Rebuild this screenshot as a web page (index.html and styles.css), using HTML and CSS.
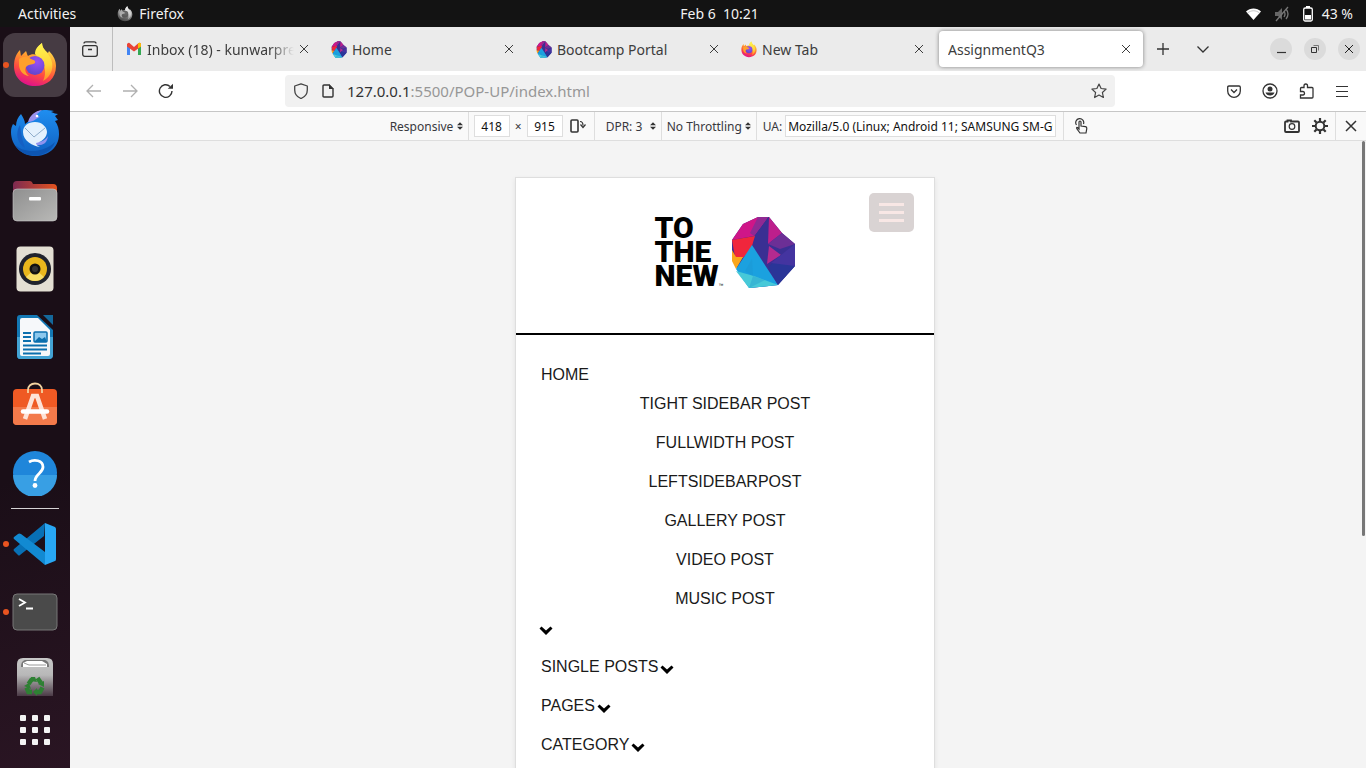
FILE: index.html
```html
<!DOCTYPE html>
<html lang="en">
<head>
<meta charset="utf-8">
<title>AssignmentQ3</title>
<meta name="viewport" content="width=device-width, initial-scale=1">
<link rel="stylesheet" href="styles.css">
</head>
<body>
<svg class="defs" width="0" height="0" aria-hidden="true">
  <defs>
    <linearGradient id="fxBody" x1="0.75" y1="0" x2="0.4" y2="1"><stop offset="0.1" stop-color="#ffe34f"/><stop offset="0.4" stop-color="#ff9a2e"/><stop offset="0.7" stop-color="#ff4a41"/><stop offset="1" stop-color="#e0128a"/></linearGradient>
    <linearGradient id="fxFlame" x1="0.5" y1="0" x2="0.6" y2="1"><stop offset="0" stop-color="#fff44f"/><stop offset="0.6" stop-color="#ffd43a"/><stop offset="1" stop-color="#ff8a2a"/></linearGradient>
    <radialGradient id="fxGlobe" cx="0.6" cy="0.3" r="0.8"><stop offset="0" stop-color="#9a4ff5"/><stop offset="1" stop-color="#5a45c8"/></radialGradient>
    <linearGradient id="tbBody" x1="0.5" y1="0" x2="0.5" y2="1"><stop offset="0" stop-color="#1f8ef0"/><stop offset="1" stop-color="#0f5fc0"/></linearGradient>
    <linearGradient id="folderBack"><stop offset="0" stop-color="#7d2a51"/><stop offset="1" stop-color="#e4531f"/></linearGradient>
    <linearGradient id="folderFront" x2="1" y2="1"><stop offset="0" stop-color="#8f8f8f"/><stop offset="1" stop-color="#b9b9b7"/></linearGradient>
    <linearGradient id="trashBody" x2="0" y2="1"><stop offset="0" stop-color="#c8c8c8"/><stop offset="0.45" stop-color="#b8b8b8"/><stop offset="1" stop-color="#4b3a46"/></linearGradient>
    <symbol id="firefox" viewBox="0 0 44 46">
      <path fill="url(#fxBody)" d="M1 24C1 17 3 12 7 8l1 6 5-5c1 2 1 4 2 5 3-2 6-2 9-1C22 8 25 4 29 1c0 4 2 7 6 10l1-2c5 5 7 10 7 15 0 13-9 20-21 20S1 36 1 24z"/>
      <path fill="url(#fxFlame)" d="M22 12C22 7 25 4 29 1c0 6 5 8 8 14 5 9 2 19-7 24 4-8 2-17-3-21-1-2-3-4-5-6z"/>
      <circle cx="22" cy="23.500" r="9.500" fill="url(#fxGlobe)"/>
      <path fill="#ffa02c" d="M6 17c4-3 8-3 12 0 2 1 5 1 4 4-2 2-6 1-8 3-3 2-2 7 2 10-7-1-10-7-10-11z"/>
    </symbol>
    <symbol id="gem" viewBox="0 0 64 72">
      <path fill="#3a2f93" d="M27 1h11l13 16 13 11v22l-17 19-28 3L6 53 1 38V24L12 8z"/>
      <path fill="#cf1688" d="M27 1 12 8 1 24l22-4L37 1z"/>
      <path fill="#8f2a93" d="M27 1h10L23 20l-4-3z"/>
      <path fill="#bd1f8c" d="m38 1 13 16-14 11z"/>
      <path fill="#6c2f96" d="m51 17 13 11-15 5-12-5z"/>
      <path fill="#b52a8f" d="m38 30 12 9-14 9z"/>
      <path fill="#f0263c" d="m1 24 23-4-4 13-8 9-8-1z"/>
      <path fill="#f9a61c" d="m1 34 4 7h7L5 53 1 45z"/>
      <path fill="#1ba1df" d="m21 29 26 40-29 3L5 53z"/>
      <path fill="#47c9d8" d="m5 55 13 17 29-3-24-9z"/>
      <path fill="#1c91cf" d="m22 60-8-5 7-12zM22 60l-4 12 16-8z" opacity=".35"/>
      <path fill="#2a3598" d="M64 50 47 69 37 51l13-12 14 12z"/>
      <path fill="#4434a0" d="m50 39 14-11v22l-24-3z"/>
    </symbol>
    <symbol id="close" viewBox="0 0 10 10"><path d="m1 1 8 8M9 1 1 9" fill="none" stroke="currentColor"/></symbol>
    <symbol id="updown" viewBox="0 0 7 9"><path d="M3.500 0 7 3.500H0zM3.500 9 7 5.500H0z" fill="#333"/></symbol>
    <symbol id="chevron" viewBox="0 0 14 10"><path d="M.5 2.500 2.500.5 7 4.500 11.500.5l2 2L7 9z" fill="#000"/></symbol>
  </defs>
</svg>

<header class="topbar">
  <div class="topbar-left">
    <button type="button">Activities</button>
    <button type="button" class="app-menu"><svg class="gray" width="16" height="16"><use href="#firefox"/></svg>Firefox</button>
  </div>
  <button type="button" class="clock">Feb 6&nbsp; 10:21</button>
  <div class="status">
    <svg width="17" height="16" viewBox="0 0 17 16"><path d="M1 5.500C5 1.500 12 1.500 16 5.500L8.500 14z" fill="#fff"/><path d="M2.500 7c3.500-3 8.500-3 12 0" fill="none" stroke="#aaa" stroke-width=".7"/></svg>
    <svg width="16" height="16" viewBox="0 0 16 16"><path d="M1 6h3l4-4v12l-4-4H1z" fill="#666"/><path d="M10 5q2 3 0 6M12 3q4 5 0 10M14 1 2 15" fill="none" stroke="#777" stroke-width="1.300"/></svg>
    <svg width="12" height="16" viewBox="0 0 12 16"><path d="M4 0h4v2H4z" fill="#fff"/><rect x="1.700" y="2" width="8.600" height="13" rx="1.500" fill="none" stroke="#fff" stroke-width="1.300"/><path d="M3 9h6v4.500H3z" fill="#fff"/></svg>
    <span>43 %</span>
  </div>
</header>

<div class="desktop">
  <nav class="dock" aria-label="Dock">
    <button type="button" class="dock-item running" aria-label="Firefox"><span class="tile active"><svg width="44" height="46"><use href="#firefox"/></svg></span></button>
    <button type="button" class="dock-item" aria-label="Thunderbird"><span class="tile"><svg width="48" height="48" viewBox="0 0 48 48">
      <path d="M0 23c0-4 1-6 2-8l3 2c0-5 2-9 5-12 2 3 4 7 4 10l4-3C20 6 26 1 33 1c4 0 6 0 10 1l-3 1c3 1 5 2 7 2l-3 2 3 4-3 1c3 4 4 8 4 13 0 14-11 22-24 22S0 37 0 23z" fill="url(#tbBody)"/>
      <path d="M17 13C19 6 24 2 31 1c-2 2-5 3-6 6 1 0 3 0 4 1-4 1-6 5-12 5z" fill="#9a92ee"/><circle cx="26" cy="7" r="1.300" fill="#fff"/>
      <path d="M4 36c8 8 28 9 40-3-5 16-31 19-40 3z" fill="#0d55b2"/>
      <path d="M9 16c-5 8-3 18 5 23-3-8-4-15-5-23z" fill="#1560c4"/><path d="M24 36c7 1 12-1 13-9-3 5-7 6-13 6z" fill="#8f93ee"/>
      <path d="M12 23c0-6 5-10 12-10s12 5 12 10-5 10-11 11c0 2 2 3 4 4-7-1-17-6-17-15z" fill="#e4f1fd"/><path d="m14 19 9 9 11-9" fill="none" stroke="#8fadcb"/></svg></span></button>
    <button type="button" class="dock-item" aria-label="Files"><span class="tile"><svg width="46" height="42" viewBox="0 0 46 42">
      <path d="M1 12V5q0-4 4-4h13q2 0 3 3h20q4 0 4 4v10z" fill="url(#folderBack)"/><rect x="1" y="9" width="44" height="32" rx="4" fill="url(#folderFront)" stroke="#c9c9c9" stroke-width=".6"/><rect x="17" y="17" width="12" height="3.500" rx="1" fill="#fff"/></svg></span></button>
    <button type="button" class="dock-item" aria-label="Rhythmbox"><span class="tile"><svg width="38" height="46" viewBox="0 0 38 46">
      <rect x=".5" y=".5" width="37" height="45" rx="4" fill="#e3dfd3"/><circle cx="19" cy="23" r="16" fill="#20232c"/><circle cx="19" cy="23" r="12" fill="#e9b71c"/><path d="M10 31a12 12 0 0 0 18 0l-9-8z" fill="#f7dd66"/><circle cx="19" cy="23" r="5.500" fill="#111"/><circle cx="19" cy="23" r="3" fill="#333"/></svg></span></button>
    <button type="button" class="dock-item" aria-label="LibreOffice Writer"><span class="tile"><svg width="38" height="46" viewBox="0 0 38 46">
      <path d="M4 1h17l16 15v25q0 4-4 4H4q-3 0-3-4V4q0-3 3-3z" fill="#1378b4"/><path d="M1 23h36v18q0 4-4 4H4q-3 0-3-4z" fill="#43a3d4"/><path d="M27 1h10v10z" fill="#14689b"/><path d="M4 6q0-2 2-2h16l12 12v24q0 2-2 2H6q-2 0-2-2z" fill="#f6f8fa"/>
      <path d="M7 19h8M7 23h8M7 27h8M7 31.500h24M7 35.500h24M7 39.500h18" stroke="#0b6fae" stroke-width="2"/><rect x="18" y="18" width="13" height="10" rx="1" fill="#8cc8ed" stroke="#0b6fae" stroke-width="1.500"/><path d="m18 28 5-5 3 2 3-2 2 5z" fill="#0b6fae"/></svg></span></button>
    <button type="button" class="dock-item" aria-label="Ubuntu Software"><span class="tile"><svg width="46" height="46" viewBox="0 0 46 46">
      <rect x="1" y="7" width="44" height="36" rx="4" fill="#ef5a24"/><path d="M1 25h44v14q0 4-4 4H5q-4 0-4-4z" fill="#f37a4b"/><path d="M16 11V8c0-4 3-6.500 7-6.500S30 4 30 8v3" fill="none" stroke="#f3d3a0" stroke-width="1.800"/><path d="M13 37 21 14h4l8 23" fill="none" stroke="#fde3d8" stroke-width="4.500"/><path d="M11 29.500h24" stroke="#fff" stroke-width="4.500" stroke-linecap="round"/></svg></span></button>
    <button type="button" class="dock-item" aria-label="Help"><span class="tile"><svg width="46" height="46" viewBox="0 0 46 46">
      <circle cx="23" cy="23" r="22" fill="#1f86da"/><path d="M1 25h44a22 22 0 0 1-44 0z" fill="#389fe4"/><path d="M17 12c5-3 14-2 14 5 0 6-8 7-8 14" fill="none" stroke="#fff" stroke-width="2.800"/><circle cx="23" cy="35.500" r="2.400" fill="#fff"/></svg></span></button>
    <hr>
    <button type="button" class="dock-item running" aria-label="Visual Studio Code"><span class="tile"><svg width="44" height="44" viewBox="0 0 44 44">
      <path d="m32 1-1 13L7 33q-1 1-2 0l-4-4q-1-1 0-2z" fill="#0870b5"/><path d="m1 15 4-3q1-1 3 0l24 18v13L1 17q-1-1 0-2z" fill="#128ad2"/><path d="m32 1 10 4q1 1 1 2v30q0 2-1 2l-10 4z" fill="#28a7f4"/></svg></span></button>
    <button type="button" class="dock-item running" aria-label="Terminal"><span class="tile"><svg width="46" height="38" viewBox="0 0 46 38">
      <rect x="1" y="1" width="44" height="36" rx="4" fill="#4a4a4a" stroke="#777"/><path d="m7 6 6 3.500L7 13M14 15.500h7" fill="none" stroke="#fff" stroke-width="1.800"/></svg></span></button>
    <button type="button" class="dock-item" aria-label="Trash"><span class="tile"><svg width="38" height="46" viewBox="0 0 38 46">
      <path d="M1 39V7q0-6 6-6h24q6 0 6 6v32z" fill="url(#trashBody)"/><path d="M5 10c0-5 2-7 5-7h18c3 0 5 2 5 7z" fill="#777"/><path d="M7 10V6l4-2h15l5 3v3z" fill="#fff"/><path d="m8 6 5 2h17" fill="none" stroke="#999"/>
      <g fill="none" stroke="#2e8033" stroke-width="4.500"><path d="m12.500 27 3.500-5M21.500 21l3.500 5M26.500 30.500l-2.500 4.500h-3M16 35h-3.500l-2-4.500"/></g><path d="m15 20 4 0 2 5-7-1zM22 27l6-3 0 6zM21 31v8l-4-4zM8 29l5-3 2 6z" fill="#2e8033"/></svg></span></button>
    <button type="button" class="apps" aria-label="Show Applications"><i></i><i></i><i></i><i></i><i></i><i></i><i></i><i></i><i></i></button>
  </nav>

  <main class="browser">
    <div class="tabstrip">
      <button type="button" class="recent" aria-label="Recent browsing"><svg width="16" height="16" viewBox="0 0 16 16" fill="none" stroke="#333" stroke-width="1.300"><rect x=".7" y="4.700" width="14.600" height="10.600" rx="2"/><path d="M2 2.500q0-1.700 2-1.700h8q2 0 2 1.700M6 8.500h4"/></svg></button>
      <div class="tabs">
        <div class="tab"><svg width="16" height="16" viewBox="0 0 16 16"><path d="M1 14V4l3 2v8z" fill="#4285f4"/><path d="M15 14V4l-3 2v8z" fill="#34a853"/><path d="M1 3q2-2 3-.500L8 6l4-3.500Q14 1 15 3v2.500L8 10.500 1 5.500z" fill="#ea4335"/><path d="M12 2.500Q14 1 15 3v2.500l-3 2z" fill="#fbbc04"/></svg><span class="title fade">Inbox (18) - kunwarpre</span><button type="button" aria-label="Close tab"><svg width="10" height="10"><use href="#close"/></svg></button></div>
        <div class="tab"><svg width="16" height="17"><use href="#gem"/></svg><span class="title">Home</span><button type="button" aria-label="Close tab"><svg width="10" height="10"><use href="#close"/></svg></button></div>
        <div class="tab"><svg width="16" height="17"><use href="#gem"/></svg><span class="title">Bootcamp Portal</span><button type="button" aria-label="Close tab"><svg width="10" height="10"><use href="#close"/></svg></button></div>
        <div class="tab"><svg width="16" height="17"><use href="#firefox"/></svg><span class="title">New Tab</span><button type="button" aria-label="Close tab"><svg width="10" height="10"><use href="#close"/></svg></button></div>
        <div class="tab selected"><span class="title">AssignmentQ3</span><button type="button" aria-label="Close tab"><svg width="10" height="10"><use href="#close"/></svg></button></div>
      </div>
      <button type="button" class="strip-button" aria-label="New tab"><svg width="12" height="12" viewBox="0 0 12 12"><path d="M6 0v12M0 6h12" stroke="#333" stroke-width="1.300"/></svg></button>
      <button type="button" class="strip-button" aria-label="List all tabs"><svg width="12" height="7" viewBox="0 0 12 7"><path d="m.5.5 5.500 5.500L11.500.5" fill="none" stroke="#333" stroke-width="1.300"/></svg></button>
      <div class="window-controls">
        <button type="button" aria-label="Minimize"><svg width="9" height="9"><path d="M0 7.500h9" stroke="#333" stroke-width="1.200"/></svg></button>
        <button type="button" aria-label="Restore"><svg width="9" height="9" fill="none" stroke="#333"><path d="M.5 2.500h5v5h-5z"/><path d="M2.500.5h5v5" stroke="#777"/></svg></button>
        <button type="button" aria-label="Close"><svg width="10" height="10"><use href="#close"/></svg></button>
      </div>
    </div>

    <div class="navbar">
      <div class="history">
        <button type="button" class="dim" aria-label="Back"><svg width="16" height="14" viewBox="0 0 16 14"><path d="M15 7H1.500M7 1 1 7l6 6" fill="none" stroke="currentColor" stroke-width="1.300"/></svg></button>
        <button type="button" class="dim" aria-label="Forward"><svg width="16" height="14" viewBox="0 0 16 14"><path d="M1 7h13.500M9 1l6 6-6 6" fill="none" stroke="currentColor" stroke-width="1.300"/></svg></button>
        <button type="button" aria-label="Reload"><svg width="16" height="16" viewBox="0 0 16 16"><path d="M14 8a6.300 6.300 0 1 1-2-4.600" fill="none" stroke="#333" stroke-width="1.400"/><path d="M15 .8v5H9.800z" fill="#333"/></svg></button>
      </div>
      <div class="urlbar">
        <svg width="16" height="16" viewBox="0 0 16 16"><path d="M8 .8 14.300 3v4c0 4-2.500 7-6.300 8.500C4.200 14 1.700 11 1.700 7V3z" fill="none" stroke="#444" stroke-width="1.300" stroke-linejoin="round"/></svg>
        <svg width="12" height="14" viewBox="0 0 12 14"><path d="M1 2q0-1 1-1h5l4 4v7q0 1-1 1H2q-1 0-1-1z" fill="none" stroke="#333" stroke-width="1.400"/><path d="M7 0v5h5z" fill="#333"/></svg>
        <div class="url" role="textbox" tabindex="0" aria-label="Address"><b>127.0.0.1</b>:5500/POP-UP/index.html</div>
        <button type="button" aria-label="Bookmark this page"><svg width="16" height="16" viewBox="0 0 16 16"><path d="m8 1 2.100 4.500 5 .6-3.700 3.400 1 5L8 12l-4.400 2.500 1-5L.9 6.100l5-.6z" fill="none" stroke="#444" stroke-width="1.200" stroke-linejoin="round"/></svg></button>
      </div>
      <div class="nav-actions">
        <button type="button" aria-label="Save to Pocket"><svg width="14" height="13" viewBox="0 0 14 13" fill="none" stroke="#333" stroke-width="1.300"><path d="M2 1h10q1.300 0 1.300 1.300V6A6 6 0 0 1 .7 6V2.300Q.7 1 2 1z"/><path d="m4 4.500 3 3 3-3"/></svg></button>
        <button type="button" aria-label="Account"><svg width="16" height="16" viewBox="0 0 16 16"><circle cx="8" cy="8" r="7" fill="none" stroke="#333" stroke-width="1.300"/><circle cx="8" cy="6" r="2.500" fill="#333"/><path d="M3.500 9.500h9Q11.500 12.500 8 12.500t-4.500-3z" fill="#333"/></svg></button>
        <button type="button" aria-label="Extensions"><svg width="15" height="16" viewBox="0 0 15 16"><path d="M1.500 5.500q0-1 1-1H5V3q0-2 1.800-2T8.500 3v1.500H13q1 0 1 1V14q0 1-1 1H1.500v-3H4q1.500 0 1.500-1.700T4 8.500H1.500z" fill="none" stroke="#333" stroke-width="1.300"/></svg></button>
        <button type="button" aria-label="Open menu"><svg width="12" height="11" viewBox="0 0 12 11"><path d="M0 .5h12M0 5.500h12M0 10.500h12" stroke="#333"/></svg></button>
      </div>
    </div>

    <div class="device-bar">
      <div class="spacer-start"></div>
      <div class="group device"><select aria-label="Device"><option>Responsive</option></select><svg width="6" height="8"><use href="#updown"/></svg></div>
      <div class="group size">
        <input type="text" value="418" aria-label="Width"><span>×</span><input type="text" value="915" aria-label="Height">
        <button type="button" aria-label="Rotate viewport"><svg width="16" height="14" viewBox="0 0 16 14"><rect x="1" y="1" width="7" height="12" rx="1" fill="none" stroke="#333" stroke-width="1.600"/><path d="M10 2.500q3 0 3 4M10.500 5.500l2.500 3 2.500-3" fill="none" stroke="#333" stroke-width="1.200"/></svg></button>
      </div>
      <div class="group dpr"><select aria-label="Device pixel ratio"><option>DPR: 3</option></select><svg width="6" height="8"><use href="#updown"/></svg></div>
      <div class="group throttle"><select aria-label="Network throttling"><option>No Throttling</option></select><svg width="6" height="8"><use href="#updown"/></svg></div>
      <div class="group agent"><label for="ua">UA:</label><input id="ua" type="text" value="Mozilla/5.0 (Linux; Android 11; SAMSUNG SM-G973U) AppleWebKit/537.36"></div>
      <button type="button" class="touch" aria-label="Touch simulation"><svg width="14" height="16" viewBox="0 0 14 16" fill="none" stroke="#333" stroke-width="1.200"><path d="M5 11V4q0-1 1-1t1 1v4l4.500.7q1.500.3 1.300 2L12 15H6L3 11q-1-2 .5-1.500z"/><path d="M2.500 7A4 4 0 1 1 9.500 6"/></svg></button>
      <div class="spacer-end"></div>
      <div class="device-actions">
        <button type="button" aria-label="Screenshot"><svg width="16" height="14" viewBox="0 0 16 14" fill="none" stroke="#333"><path d="M2 2.500h1.500v-1H7v1h7q1 0 1 1v8.500q0 1-1 1H2q-1 0-1-1V3.500q0-1 1-1z" stroke-width="1.800"/><circle cx="8" cy="7.500" r="2.800" stroke-width="1.200"/></svg></button>
        <button type="button" aria-label="Settings"><svg width="16" height="16" viewBox="0 0 16 16" fill="none" stroke="#333"><circle cx="8" cy="8" r="4.300" stroke-width="2"/><path d="M8 0v3M8 13v3M0 8h3M13 8h3M2.300 2.300l2.200 2.200M11.500 11.500l2.200 2.200M13.700 2.300l-2.200 2.200M4.500 11.500l-2.200 2.200" stroke-width="2.200"/></svg></button>
      </div>
      <button type="button" class="device-close" aria-label="Close responsive design mode"><svg width="12" height="12" viewBox="0 0 12 12"><path d="m1 1 10 10M11 1 1 11" stroke="#333" stroke-width="1.500"/></svg></button>
    </div>

    <div class="canvas">
      <div class="viewport">
        <header class="site-header">
          <a href="#" class="logo"><span class="wordmark"><span>TO</span><span>THE</span><span>NEW</span></span><small>™</small><svg width="64" height="72"><use href="#gem"/></svg></a>
          <button type="button" class="burger" aria-label="Menu"><i></i><i></i><i></i></button>
        </header>
        <nav class="site-nav">
          <ul class="menu">
            <li class="home"><a href="#">HOME</a>
              <ul class="submenu">
                <li><a href="#">TIGHT SIDEBAR POST</a></li>
                <li><a href="#">FULLWIDTH POST</a></li>
                <li><a href="#">LEFTSIDEBARPOST</a></li>
                <li><a href="#">GALLERY POST</a></li>
                <li><a href="#">VIDEO POST</a></li>
                <li><a href="#">MUSIC POST</a></li>
              </ul>
              <svg class="caret" width="14" height="10"><use href="#chevron"/></svg>
            </li>
            <li class="entry"><a href="#">SINGLE POSTS</a><svg width="14" height="10"><use href="#chevron"/></svg></li>
            <li class="entry"><a href="#">PAGES</a><svg width="14" height="10"><use href="#chevron"/></svg></li>
            <li class="entry"><a href="#">CATEGORY</a><svg width="14" height="10"><use href="#chevron"/></svg></li>
          </ul>
        </nav>
      </div>
      <div class="scroll-thumb"></div>
    </div>
  </main>
</div>
</body>
</html>
```

FILE: styles.css
```css
* { box-sizing: border-box; }
body {
  margin: 0;
  height: 100vh;
  display: flex;
  flex-direction: column;
  overflow: hidden;
  font: 14px "Noto Sans", sans-serif;
  color: #3d3d3d;
}
button {
  display: flex;
  align-items: center;
  justify-content: center;
  padding: 0;
  border: 0;
  background: none;
  font: inherit;
  color: inherit;
}
svg { flex: none; display: block; }
.defs { position: absolute; }
a { color: inherit; text-decoration: none; }
ul { list-style: none; margin: 0; padding: 0; }

/* System bar */
.topbar { flex: none; display: flex; align-items: center; height: 27px; background: #131313; color: #f2f2f2; }
.topbar-left { flex: 1 1 70px; display: flex; gap: 41px; padding-left: 18px; }
.app-menu { gap: 6px; }
.gray { filter: grayscale(1); }
.clock { margin-left: 16px; }
.status { flex: 1 1 0; display: flex; align-items: center; justify-content: flex-end; gap: 12px; padding-right: 13px; }
.status span { margin-left: -4px; }

/* Dock */
.desktop { flex: 1; display: flex; min-height: 0; }
.dock {
  flex: none;
  width: 70px;
  display: flex;
  flex-direction: column;
  align-items: center;
  padding-top: 4px;
  background: linear-gradient(165deg, #1a0e17 60%, #2a1523);
}
.dock-item { position: relative; flex: none; width: 70px; height: 68px; }
.tile { display: flex; align-items: center; justify-content: center; width: 64px; height: 64px; border-radius: 12px; }
.tile.active { background: #463b43; }
.running::before { content: ""; position: absolute; left: 3px; top: 31px; width: 6px; height: 6px; border-radius: 50%; background: #e95420; }
.dock hr { flex: none; width: 48px; height: 1px; margin: 1px 0; border: 0; background: #d6d3d5; }
.apps { display: grid; grid-template-columns: repeat(3, 6px); gap: 6px; flex: none; height: 32px; align-content: center; }
.apps i { width: 6px; height: 6px; border-radius: 1px; background: #f4f4f4; }

/* Tab strip */
.browser { flex: 1; min-width: 0; display: flex; flex-direction: column; }
.tabstrip { flex: none; display: flex; align-items: center; height: 44px; background: #ebebeb; }
.recent { flex: none; width: 43px; height: 44px; border-right: 1px solid #bdbdbd; padding-right: 2px; }
.tabs { display: flex; flex: 0 1 1030px; min-width: 0; padding-left: 5px; }
.tab { flex: 0 1 205px; min-width: 0; display: flex; align-items: center; gap: 5px; height: 36px; padding: 0 14px 0 8px; }
.title { flex: 1; min-width: 0; overflow: hidden; white-space: nowrap; }
.fade { -webkit-mask-image: linear-gradient(to left, transparent, #000 24px); mask-image: linear-gradient(to left, transparent, #000 24px); }
.tab button { width: 10px; height: 20px; }
.tab.selected { flex-basis: 204px; margin-left: 1px; padding: 0 12px 0 9px; background: #fff; border-radius: 4px; box-shadow: 0 0 4px rgba(0, 0, 0, .45); }
.strip-button { flex: none; width: 40px; height: 36px; }
.window-controls { display: flex; gap: 12px; margin-left: auto; padding-right: 6px; }
.window-controls button { width: 22px; height: 22px; border-radius: 50%; background: #dbdbdb; color: #222; }

/* Address bar */
.navbar { flex: none; display: flex; align-items: center; height: 41px; background: #fff; border-bottom: 1px solid #c6c6c6; }
.history { display: flex; flex: none; padding-left: 6px; }
.history button { width: 36px; height: 32px; }
.dim { color: #b0b0b0; }
.urlbar { flex: 1 1 830px; max-width: 830px; display: flex; align-items: center; gap: 13px; height: 32px; margin-left: 101px; padding: 0 8px; border-radius: 4px; background: #f1f1f1; }
.url { flex: 1; font-size: 15px; color: #979797; white-space: nowrap; }
.url b { font-weight: 400; color: #333; }
.nav-actions { display: flex; margin-left: auto; padding-right: 6px; }
.nav-actions button { width: 36px; height: 32px; }

/* Responsive design toolbar */
.device-bar { flex: none; display: flex; align-items: stretch; height: 29px; background: #f9f9f9; border-bottom: 1px solid #dedede; font-size: 12px; color: #38383d; }
.spacer-start { flex: 314 1 0; }
.spacer-end { flex: 182 1 0; }
.group { flex: none; display: flex; align-items: center; border-right: 1px solid #dedede; }
.group select { appearance: none; padding: 0; border: 0; background: none; font: inherit; color: inherit; }
.device { width: 84px; justify-content: flex-end; gap: 3px; padding-right: 5px; }
.size { width: 126px; gap: 5px; padding-left: 5px; }
.size button { margin-left: 2px; }
.group input { height: 22px; border: 1px solid #dedede; background: #fff; font: inherit; color: #111; }
.size input { width: 36px; padding: 0; text-align: center; }
.dpr { width: 67px; justify-content: flex-end; gap: 7px; padding-right: 5px; }
.throttle { width: 95px; justify-content: flex-end; gap: 2px; padding-right: 5px; }
.agent { width: 307px; gap: 3px; padding: 0 7px 0 6px; }
.agent input { flex: 1; min-width: 0; padding: 0 2px; }
.touch { width: 34px; }
.device-actions { display: flex; gap: 12px; padding: 0 7px 0 4px; border-right: 1px solid #dedede; }
.device-close { width: 30px; }

/* Emulated page */
.canvas { position: relative; flex: 1; min-height: 0; display: flex; justify-content: center; padding: 36px 0 0 14px; background: #f4f4f4; overflow: hidden; }
.viewport { width: 420px; min-height: 915px; border: 1px solid #dedede; background: #fff; box-shadow: 0 2px 5px rgba(0, 0, 0, .08); font: 16px/19px "Liberation Sans", Arial, sans-serif; color: #1a1a1a; }
.scroll-thumb { position: absolute; right: 1px; top: 0; width: 3px; height: 395px; border-radius: 2px; background: #777; }
.site-header { position: relative; display: flex; justify-content: center; padding: 38px 0 45px; border-bottom: 2px solid #000; }
.logo { display: flex; align-items: center; color: #000; }
.wordmark { display: flex; flex-direction: column; font: 900 30px/24px Roboto, sans-serif; }
.logo small { align-self: flex-end; margin-right: 8px; font-size: 5px; line-height: 6px; }
.burger { position: absolute; top: 15px; right: 20px; width: 45px; height: 39px; flex-direction: column; gap: 5px; border-radius: 5px; background: #d9d3d3; }
.burger i { width: 25px; height: 3px; background: #f8e7e5; }
.site-nav { padding: 30px 25px; }
.submenu { text-align: center; }
.submenu li { height: 39px; line-height: 39px; }
.home .caret { margin: 8px 0 11px -2px; }
.entry { display: flex; align-items: center; gap: 2px; height: 39px; }
.entry svg { margin-top: 6px; }
```
